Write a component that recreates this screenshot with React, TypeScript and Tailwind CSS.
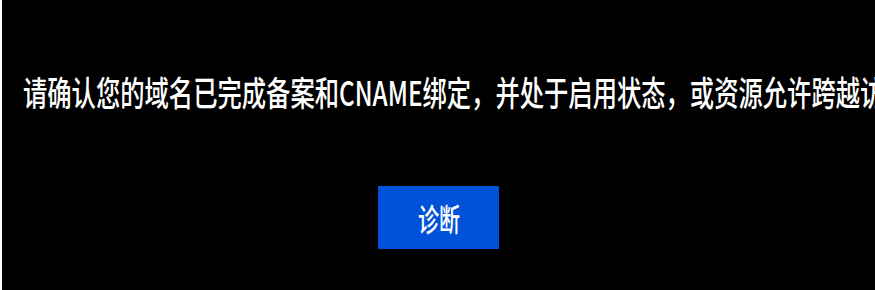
export default function App() {
  return (
    <div
      className="w-[875px] h-[290px] bg-black border-l-2 border-white overflow-hidden flex flex-col"
      style={{ fontFamily: '"Noto Sans CJK SC", "Noto Sans", sans-serif' }}
    >
      <div className="pt-[72px] pl-[21px]">
        <p className="text-white text-[34px] leading-[40px] font-medium whitespace-nowrap origin-left scale-x-[0.715]">
          请确认您的域名已完成备案和CNAME绑定，并处于启用状态，或资源允许跨越访问。
        </p>
      </div>
      <div className="mt-[74px] flex justify-center">
        <button className="w-[121px] h-[63px] bg-[#0052d9] text-white flex items-center justify-center">
          <span className="text-[31px] leading-none font-medium scale-x-[0.68]">诊断</span>
        </button>
      </div>
    </div>
  );
}
